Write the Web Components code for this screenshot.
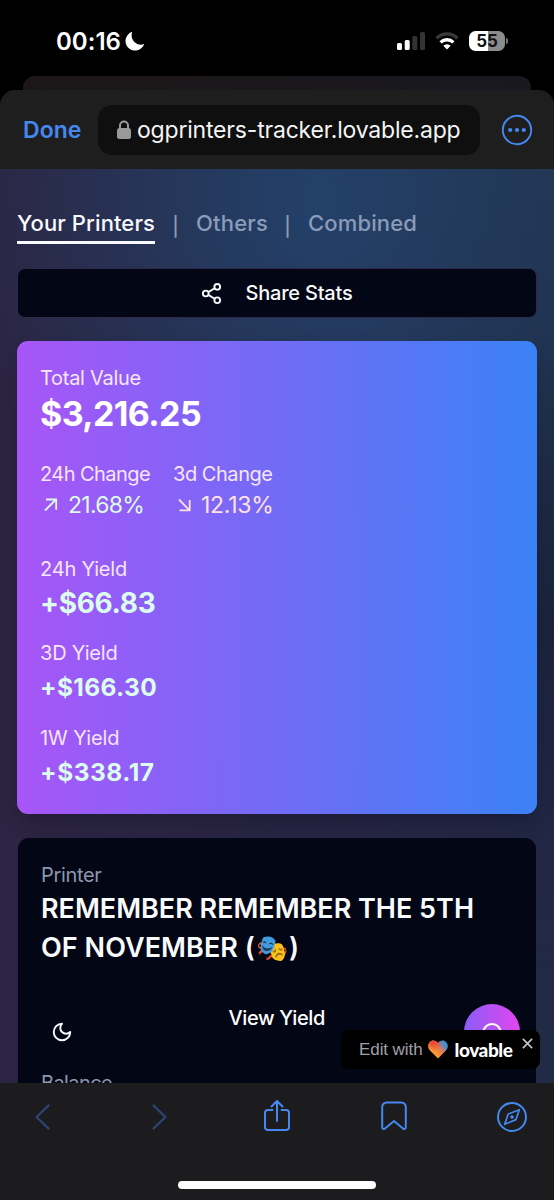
<!DOCTYPE html>
<html lang="en">
<head>
<meta charset="UTF-8">
<meta name="viewport" content="width=device-width, initial-scale=1.0">
<title>OG Printers Tracker</title>
<style>
    html, body {
        margin: 0;
        background: #000;
    }
    body {
        font-family: Inter, "Liberation Sans", sans-serif;
        color: #fff;
        height: 1200px;
        overflow: hidden;
    }
</style>
</head>
<body>
<phone-screen></phone-screen>

<script>
// One line of text, tracked so that it fills the given width.
class FitText extends HTMLElement {
    constructor() {
        super();
        this.attachShadow({ mode: 'open' });
    }

    connectedCallback() {
        this.shadowRoot.innerHTML = `
            <style>
                :host { display: block; white-space: nowrap; }
                span { display: inline-block; }
            </style>
            <span><slot></slot></span>
        `;
        const span = this.shadowRoot.querySelector('span');
        const width = Number(this.getAttribute('width'));
        const count = [...this.textContent].length;
        if (width) {
            const natural = span.getBoundingClientRect().width;
            span.style.letterSpacing = (width - natural) / count + 'px';
        }
    }
}

class StatusBar extends HTMLElement {
    constructor() {
        super();
        this.attachShadow({ mode: 'open' });
    }

    connectedCallback() {
        this.shadowRoot.innerHTML = `
            <style>
                :host {
                    display: flex;
                    align-items: center;
                    height: 76px;
                    padding: 6px 46px 0 56px;
                    box-sizing: border-box;
                }
                .time { font-size: 24px; font-weight: 600; line-height: 30px; padding-top: 1px; }
                svg { display: block; }
                .moon { margin-left: 4px; }
                .signal { margin-left: auto; }
                .wifi { margin-left: 10px; }
                .battery {
                    margin-left: 10px;
                    width: 36px;
                    height: 20px;
                    border-radius: 6.5px;
                    background: linear-gradient(90deg, #fff 54%, #8b8b8b 54%);
                    color: #111;
                    font-size: 17px;
                    font-weight: 700;
                    line-height: 20px;
                    text-align: center;
                }
                .cap {
                    width: 2px;
                    height: 6px;
                    margin-left: 1px;
                    border-radius: 0 2px 2px 0;
                    background: #777;
                }
            </style>
            <fit-text class="time" width="65">00:16</fit-text>
            <svg class="moon" width="20" height="20" viewBox="0 0 20 20">
                <path fill="#fff" d="M7.2 .8A9.6 9.6 0 1 0 19.2 13C12 15.8 4.4 9 7.2 .8Z"/>
            </svg>
            <svg class="signal" width="28" height="18" viewBox="0 0 28 18">
                <rect x="0" y="11" width="5" height="7" rx="1.5" fill="#fff"/>
                <rect x="7.7" y="8" width="5" height="10" rx="1.5" fill="#fff"/>
                <rect x="15.3" y="4" width="5" height="14" rx="1.5" fill="#333"/>
                <rect x="23" y="0" width="5" height="18" rx="1.5" fill="#333"/>
            </svg>
            <svg class="wifi" width="24" height="18" viewBox="0 0 24 18">
                <path fill="none" stroke="#3a3a3a" stroke-width="3.3" d="M1.5 6.2a15 15 0 0 1 21 0"/>
                <path fill="none" stroke="#fff" stroke-width="3.4" d="M5.6 10.4a9.2 9.2 0 0 1 12.8 0"/>
                <path fill="#fff" d="M12 17.5 8.3 13.8a5.2 5.2 0 0 1 7.4 0Z"/>
            </svg>
            <div class="battery">55</div>
            <div class="cap"></div>
        `;
    }
}

class AddressBar extends HTMLElement {
    constructor() {
        super();
        this.attachShadow({ mode: 'open' });
    }

    connectedCallback() {
        this.shadowRoot.innerHTML = `
            <style>
                :host {
                    display: flex;
                    align-items: center;
                    height: 79px;
                    padding: 0 21px 0 23px;
                    box-sizing: border-box;
                    border-radius: 15px 15px 0 0;
                    background: #1e1e1e;
                    font-size: 23px;
                    line-height: 30px;
                }
                .done { color: #4488f0; font-weight: 600; width: 75px; }
                .url {
                    display: flex;
                    align-items: center;
                    width: 382px;
                    height: 50px;
                    padding-left: 19px;
                    box-sizing: border-box;
                    border-radius: 14px;
                    background: #0f0f0f;
                    color: #f5f5f5;
                }
                .url svg { margin: 0 6px 1px 0; }
                svg { display: block; }
                .more { margin-left: auto; }
            </style>
            <fit-text class="done" width="58.5">Done</fit-text>
            <div class="url">
                <svg width="14" height="19" viewBox="0 0 14 19">
                    <path fill="none" stroke="#999" stroke-width="2" d="M3 9V5.5a4 4 0 0 1 8 0V9"/>
                    <rect y="8" width="14" height="11" rx="2.5" fill="#999"/>
                </svg>
                <fit-text width="323.5">ogprinters-tracker.lovable.app</fit-text>
            </div>
            <svg class="more" width="32" height="32" viewBox="0 0 32 32">
                <circle cx="16" cy="16" r="14.2" fill="none" stroke="#4488f0" stroke-width="1.9"/>
                <g fill="#4488f0">
                    <circle cx="9.2" cy="16" r="2.1"/>
                    <circle cx="16" cy="16" r="2.1"/>
                    <circle cx="22.8" cy="16" r="2.1"/>
                </g>
            </svg>
        `;
    }
}

class PrinterTabs extends HTMLElement {
    constructor() {
        super();
        this.attachShadow({ mode: 'open' });
    }

    connectedCallback() {
        this.shadowRoot.innerHTML = `
            <style>
                :host {
                    display: flex;
                    flex-shrink: 0;
                    height: 36px;
                    font-size: 22px;
                    font-weight: 500;
                    line-height: 31px;
                    color: #8a9cb8;
                }
                .active {
                    width: 138px;
                    height: 33px;
                    border-bottom: 3px solid #f8fafc;
                    color: #f8fafc;
                }
                .sep {
                    width: 41px;
                    font-size: 19px;
                    line-height: 38px;
                    text-align: center;
                }
                .others { width: 71px; }
            </style>
            <fit-text class="active" width="138">Your Printers</fit-text>
            <div class="sep">|</div>
            <fit-text class="others" width="72">Others</fit-text>
            <div class="sep">|</div>
            <fit-text width="109">Combined</fit-text>
        `;
    }
}

class ShareButton extends HTMLElement {
    constructor() {
        super();
        this.attachShadow({ mode: 'open' });
    }

    connectedCallback() {
        this.shadowRoot.innerHTML = `
            <style>
                :host {
                    display: flex;
                    flex-shrink: 0;
                    align-items: center;
                    justify-content: center;
                    gap: 23px;
                    height: 50px;
                    padding-right: 2px;
                    box-sizing: border-box;
                    border: 1.5px solid #32284a;
                    border-radius: 8px;
                    background: #020615;
                    color: #f8fafc;
                    font-size: 20px;
                    font-weight: 500;
                    line-height: 28px;
                }
                svg { display: block; }
            </style>
            <svg width="23" height="23" viewBox="0 0 24 24" fill="none" stroke="#f8fafc" stroke-width="2">
                <circle cx="18" cy="5" r="3"/>
                <circle cx="6" cy="12" r="3"/>
                <circle cx="18" cy="19" r="3"/>
                <path d="M8.6 13.5l6.8 4M15.4 6.5l-6.8 4"/>
            </svg>
            <fit-text width="107">Share Stats</fit-text>
        `;
    }
}

class YieldStat extends HTMLElement {
    constructor() {
        super();
        this.attachShadow({ mode: 'open' });
    }

    connectedCallback() {
        const [labelWidth, valueWidth] = this.getAttribute('widths').split(' ');
        this.shadowRoot.innerHTML = `
            <style>
                :host { display: block; }
                .label { font-size: 20px; line-height: 28px; color: #f6e6ff; }
                .value {
                    font-size: var(--value-size, 24.5px);
                    font-weight: 700;
                    line-height: 40px;
                    color: #dcfcf0;
                }
            </style>
            <fit-text class="label" width="${labelWidth}">${this.getAttribute('label')}</fit-text>
            <fit-text class="value" width="${valueWidth}">${this.getAttribute('value')}</fit-text>
        `;
    }
}

class TotalCard extends HTMLElement {
    constructor() {
        super();
        this.attachShadow({ mode: 'open' });
    }

    connectedCallback() {
        this.shadowRoot.innerHTML = `
            <style>
                :host {
                    display: block;
                    flex-shrink: 0;
                    height: 473px;
                    padding: 23px 23px 0;
                    box-sizing: border-box;
                    border-radius: 11px;
                    background: linear-gradient(90deg, #a855f7, #3b82f6);
                    box-shadow: 0 10px 20px -4px rgba(0, 0, 20, .25);
                }
                .label { font-size: 20px; line-height: 28px; color: #f6e6ff; }
                .total { font-size: 34px; font-weight: 700; line-height: 44px; }
                .changes { display: flex; gap: 23px; margin-top: 23.5px; }
                .change {
                    display: flex;
                    align-items: center;
                    font-size: 23px;
                    line-height: 34px;
                }
                .up { color: #dcfce7; }
                .down { color: #fee2e2; }
                svg { display: block; margin: 0 6px 0 0; }
                .yields {
                    display: flex;
                    flex-direction: column;
                    gap: 16.5px;
                    margin-top: 33px;
                }
                .big { --value-size: 28px; }
            </style>
            <fit-text class="label" width="101">Total Value</fit-text>
            <fit-text class="total" width="161">$3,216.25</fit-text>
            <div class="changes">
                <div>
                    <fit-text class="label" width="110">24h Change</fit-text>
                    <div class="change up">
                        <svg width="22" height="22" viewBox="0 0 22 22" fill="none" stroke="currentColor" stroke-width="1.8">
                            <path d="M5 16.5 16 5.5M6 5.5h10.2v10.2"/>
                        </svg>
                        <fit-text width="76">21.68%</fit-text>
                    </div>
                </div>
                <div>
                    <fit-text class="label" width="99.5">3d Change</fit-text>
                    <div class="change down">
                        <svg width="22" height="22" viewBox="0 0 22 22" fill="none" stroke="currentColor" stroke-width="1.8">
                            <path d="M6 5.500 16.500 16.300M6.500 16.300h10.200V6"/>
                        </svg>
                        <fit-text width="72.5">12.13%</fit-text>
                    </div>
                </div>
            </div>
            <div class="yields">
                <yield-stat class="big" label="24h Yield" value="+$66.83" widths="87 115.5"></yield-stat>
                <yield-stat label="3D Yield" value="+$166.30" widths="77.5 117"></yield-stat>
                <yield-stat label="1W Yield" value="+$338.17" widths="79.5 114.5"></yield-stat>
            </div>
        `;
    }
}

class PrinterCard extends HTMLElement {
    constructor() {
        super();
        this.attachShadow({ mode: 'open' });
    }

    connectedCallback() {
        this.shadowRoot.innerHTML = `
            <style>
                :host {
                    display: block;
                    flex-shrink: 0;
                    height: 330px;
                    margin: 0 1px;
                    padding: 22.5px 16px 0 23px;
                    box-sizing: border-box;
                    border-radius: 11px;
                    background: #020615;
                }
                .label { font-size: 20px; line-height: 28px; color: #8b98ad; }
                .title {
                    display: flex;
                    font-size: 27px;
                    font-weight: 600;
                    line-height: 39.3px;
                    color: #f8fafc;
                }
                .emoji { width: 34px; font-size: 26px; text-align: center; }
                .row {
                    display: flex;
                    align-items: flex-start;
                    height: 58px;
                    margin-top: 37px;
                }
                .moon { margin: 17px 0 0 10px; }
                .view {
                    margin: 0 0 0 155.5px;
                    font-size: 20px;
                    font-weight: 500;
                    line-height: 28px;
                }
                .round { margin: 0 0 0 auto; }
                svg { display: block; }
                .balance { margin-top: 6.5px; }
            </style>
            <fit-text class="label" width="60.5">Printer</fit-text>
            <fit-text class="title" width="433">REMEMBER REMEMBER THE 5TH</fit-text>
            <div class="title">
                <fit-text width="214">OF NOVEMBER (</fit-text>
                <span class="emoji">🎭</span>
                <span>)</span>
            </div>
            <div class="row">
                <svg class="moon" width="22" height="22" viewBox="0 0 24 24" fill="none" stroke="#f8fafc" stroke-width="2.1" stroke-linecap="round" stroke-linejoin="round">
                    <path d="M12 3a6 6 0 0 0 9 9 9 9 0 1 1-9-9Z"/>
                </svg>
                <fit-text class="view" width="96.5">View Yield</fit-text>
                <svg class="round" width="56" height="56" viewBox="0 0 56 56">
                    <defs>
                        <linearGradient id="glow" x1="0" x2="1">
                            <stop offset="0" stop-color="#8b5cf6"/>
                            <stop offset="1" stop-color="#e346ef"/>
                        </linearGradient>
                    </defs>
                    <circle cx="28" cy="28" r="28" fill="url(#glow)"/>
                    <circle cx="28" cy="28.8" r="8.8" fill="none" stroke="#fff" stroke-width="2"/>
                </svg>
            </div>
            <fit-text class="label balance" width="71">Balance</fit-text>
        `;
    }
}

class LovableBadge extends HTMLElement {
    constructor() {
        super();
        this.attachShadow({ mode: 'open' });
    }

    connectedCallback() {
        this.shadowRoot.innerHTML = `
            <style>
                :host {
                    display: flex;
                    align-items: center;
                    width: 199px;
                    height: 39px;
                    padding-left: 18px;
                    box-sizing: border-box;
                    border-radius: 8px;
                    background: #000;
                }
                .edit {
                    font: 17px/24px "Liberation Sans", sans-serif;
                    color: #a1a1aa;
                }
                .heart { margin: 0 7px 1px 5px; }
                .name {
                    font-family: Lato, sans-serif;
                    font-size: 19px;
                    font-weight: 900;
                    line-height: 24px;
                }
                .close { margin: -13px 0 0 9px; }
                svg { display: block; }
            </style>
            <fit-text class="edit" width="63.5">Edit with</fit-text>
            <svg class="heart" width="20" height="19" viewBox="0 0 20 19">
                <defs>
                    <linearGradient id="heart" x1=".15" y1=".8" x2=".95" y2=".2">
                        <stop offset=".1" stop-color="#fda52f"/>
                        <stop offset=".45" stop-color="#f5813f"/>
                        <stop offset=".68" stop-color="#b08080"/>
                        <stop offset=".88" stop-color="#3d8fd0"/>
                    </linearGradient>
                    <radialGradient id="ember" cx=".25" cy=".1" r=".5">
                        <stop offset="0" stop-color="#ec4032"/>
                        <stop offset="1" stop-color="#ec4032" stop-opacity="0"/>
                    </radialGradient>
                    <path id="shape" d="M10 18.600 2 10.400C.6 9 .2 7.600 .2 6 .2 3 2.500 .5 5.400 .5 7.400 .5 9 1.500 10 3 11 1.500 12.600 .5 14.600 .5 17.500 .5 19.800 3 19.800 6c0 1.600-.4 3-1.800 4.400Z"/>
                </defs>
                <use href="#shape" fill="url(#heart)"/>
                <use href="#shape" fill="url(#ember)"/>
            </svg>
            <fit-text class="name" width="58">lovable</fit-text>
            <svg class="close" width="11" height="11" viewBox="0 0 10 10" stroke="#c4c4c8" stroke-width="1.500">
                <path d="M.8.8 9.200 9.200M9.200.8.8 9.200"/>
            </svg>
        `;
    }
}

class BrowserToolbar extends HTMLElement {
    constructor() {
        super();
        this.attachShadow({ mode: 'open' });
    }

    connectedCallback() {
        this.shadowRoot.innerHTML = `
            <style>
                :host {
                    display: flex;
                    flex-direction: column;
                    align-items: center;
                    height: 117px;
                    background: #1c1c1e;
                }
                .icons {
                    display: flex;
                    align-items: center;
                    justify-content: space-between;
                    width: 503px;
                    height: 68px;
                }
                svg {
                    display: block;
                    fill: none;
                    stroke: #4488f0;
                    stroke-width: 2;
                    stroke-linecap: round;
                    stroke-linejoin: round;
                }
                .off { stroke: #2b4677; stroke-width: 2.2; }
                .home {
                    width: 198px;
                    height: 7.500px;
                    margin-top: 30px;
                    border-radius: 4px;
                    background: #fff;
                }
            </style>
            <div class="icons">
                <svg class="off" width="34" height="34" viewBox="0 0 34 34"><path d="M22.500 5.500 10.500 17l12 11.500"/></svg>
                <svg class="off" width="34" height="34" viewBox="0 0 34 34"><path d="m10.500 5.500 12 11.500-12 11.500"/></svg>
                <svg width="34" height="34" viewBox="0 0 34 34">
                    <path d="M12.500 10H8a3 3 0 0 0-3 3v14a3 3 0 0 0 3 3h18a3 3 0 0 0 3-3V13a3 3 0 0 0-3-3h-4.500M17 21V1.500M11.500 6.500 17 1l5.500 5.500"/>
                </svg>
                <svg width="34" height="34" viewBox="0 0 34 34">
                    <path d="M5.200 27V7a4.500 4.500 0 0 1 4.500-4.500h14.600A4.500 4.500 0 0 1 28.800 7v20c0 2-1.400 2.600-2.800 1.400l-9-7.400-9 7.400C6.600 29.600 5.200 29 5.200 27Z"/>
                </svg>
                <svg width="34" height="34" viewBox="0 0 34 34">
                    <circle cx="17" cy="17" r="14"/>
                    <path stroke-width="1.700" d="M24.300 9.700 21 19.600 9.700 24.300 13.200 14Z"/>
                    <circle cx="17" cy="17" r="1.300" fill="#4488f0" stroke-width="1"/>
                </svg>
            </div>
            <div class="home"></div>
        `;
    }
}

class PhoneScreen extends HTMLElement {
    constructor() {
        super();
        this.attachShadow({ mode: 'open' });
    }

    connectedCallback() {
        this.shadowRoot.innerHTML = `
            <style>
                :host {
                    display: block;
                    position: relative;
                    width: 554px;
                    height: 1200px;
                    overflow: hidden;
                    background: #000;
                }
                .behind {
                    height: 14px;
                    margin: 0 23px;
                    border-radius: 12px 12px 0 0;
                    background: linear-gradient(90deg, #1c1717, #191821);
                }
                .page {
                    display: flex;
                    flex-direction: column;
                    height: 914px;
                    padding: 39px 17px 0;
                    box-sizing: border-box;
                    overflow: hidden;
                    background:
                        radial-gradient(ellipse 360px 400px at 320px 30px, rgba(35, 66, 108, .95), rgba(35, 62, 98, 0)),
                        linear-gradient(90deg, #2c2442, rgba(44, 36, 66, .6) 50%, rgba(44, 36, 66, 0)),
                        linear-gradient(180deg, #213248, #1f2f48 18%, #1b233c 50%, #222745 78%, #212b45);
                }
                printer-tabs { margin-bottom: 24px; }
                share-button { margin-bottom: 23px; }
                total-card { margin-bottom: 24px; }
                /* floats over the page */
                lovable-badge { position: absolute; right: 14px; bottom: 131px; }
            </style>
            <status-bar></status-bar>
            <div class="behind"></div>
            <address-bar></address-bar>
            <div class="page">
                <printer-tabs></printer-tabs>
                <share-button></share-button>
                <total-card></total-card>
                <printer-card></printer-card>
            </div>
            <browser-toolbar></browser-toolbar>
            <lovable-badge></lovable-badge>
        `;
    }
}

customElements.define('fit-text', FitText);
customElements.define('status-bar', StatusBar);
customElements.define('address-bar', AddressBar);
customElements.define('printer-tabs', PrinterTabs);
customElements.define('share-button', ShareButton);
customElements.define('yield-stat', YieldStat);
customElements.define('total-card', TotalCard);
customElements.define('printer-card', PrinterCard);
customElements.define('lovable-badge', LovableBadge);
customElements.define('browser-toolbar', BrowserToolbar);
customElements.define('phone-screen', PhoneScreen);
</script>
</body>
</html>
